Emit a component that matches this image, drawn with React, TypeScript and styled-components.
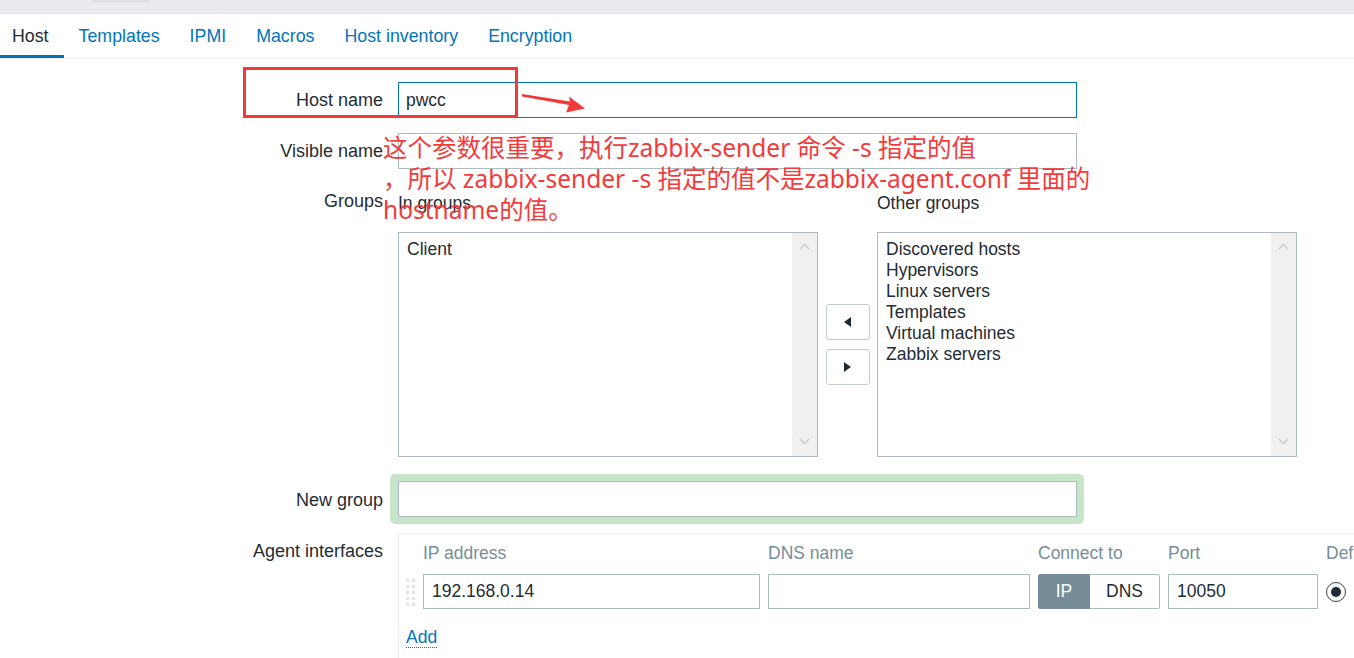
import React from 'react';
import styled, {createGlobalStyle} from "styled-components";

const GlobalStyle = createGlobalStyle`
    html, body {
        margin: 0;
        padding: 0;
        overflow: hidden;
        background: #ffffff;
    }
    body {
        font-family: "Liberation Sans", Arial, sans-serif;
        color: #1f2c33;
    }
    * {
        box-sizing: border-box;
    }
`

const tabs = ['Host', 'Templates', 'IPMI', 'Macros', 'Host inventory', 'Encryption'];
const inGroups = ['Client'];
const otherGroups = ['Discovered hosts', 'Hypervisors', 'Linux servers', 'Templates', 'Virtual machines', 'Zabbix servers'];

const Chevron = ({up}: { up?: boolean }) => (
    <svg width="11" height="7" viewBox="0 0 11 7">
        <path d={up ? "M1 6 L5.5 1.5 L10 6" : "M1 1 L5.5 5.5 L10 1"} stroke="#c6c6c6" strokeWidth="1.4" fill="none"/>
    </svg>
);

const Triangle = ({left}: { left?: boolean }) => (
    <svg width="7" height="10" viewBox="0 0 7 10">
        <path d={left ? "M7 0 L0 5 L7 10 Z" : "M0 0 L7 5 L0 10 Z"} fill="#1f2c33"/>
    </svg>
);

const DragHandle = () => (
    <svg width="9" height="27" viewBox="0 0 9 27">
        {[0, 6, 12, 18, 24].map(y => (
            <React.Fragment key={y}>
                <rect x="0" y={y} width="3" height="3" fill="#e1e4e7"/>
                <rect x="6" y={y} width="3" height="3" fill="#e1e4e7"/>
            </React.Fragment>
        ))}
    </svg>
);

const ListBox = ({items}: { items: string[] }) => (
    <List>
        <ListItems>
            {items.map(item => <div key={item}>{item}</div>)}
        </ListItems>
        <ScrollTrack>
            <Chevron up/>
            <Chevron/>
        </ScrollTrack>
    </List>
);

export default function App() {
    return (
        <Page>
            <GlobalStyle/>
            <TopStrip>
                <TopNub/>
            </TopStrip>
            <TabBar>
                {tabs.map((t, i) => <Tab key={t} $active={i === 0}>{t}</Tab>)}
            </TabBar>

            <Form>
                <FormRow $mt={0}>
                    <Label $lh={36}>Host name</Label>
                    <TextInput $focused defaultValue="pwcc"/>
                </FormRow>
                <FormRow $mt={15}>
                    <Label $lh={36}>Visible name</Label>
                    <TextInput defaultValue=""/>
                </FormRow>
                <FormRow $mt={22}>
                    <Label $lh={20}>Groups</Label>
                    <GroupsGrid>
                        <ColHeader>In groups</ColHeader>
                        <span/>
                        <ColHeader>Other groups</ColHeader>
                        <ListBox items={inGroups}/>
                        <ShiftButtons>
                            <ShiftButton><Triangle left/></ShiftButton>
                            <ShiftButton><Triangle/></ShiftButton>
                        </ShiftButtons>
                        <ListBox items={otherGroups}/>
                    </GroupsGrid>
                </FormRow>
                <FormRow $mt={25}>
                    <Label $lh={36}>New group</Label>
                    <div>
                        <Glow>
                            <TextInput defaultValue=""/>
                        </Glow>
                    </div>
                </FormRow>
                <FormRow $mt={15}>
                    <Label $lh={20} style={{paddingTop: 8}}>Agent interfaces</Label>
                    <InterfaceBox>
                        <InterfaceGrid>
                            <span/>
                            <HeadCell>IP address</HeadCell>
                            <HeadCell>DNS name</HeadCell>
                            <HeadCell>Connect to</HeadCell>
                            <HeadCell>Port</HeadCell>
                            <HeadCell>Default</HeadCell>

                            <HandleCell><DragHandle/></HandleCell>
                            <CellInput defaultValue="192.168.0.14"/>
                            <CellInput defaultValue=""/>
                            <Segmented>
                                <SegButton $active $w={52}>IP</SegButton>
                                <SegButton $w={70}>DNS</SegButton>
                            </Segmented>
                            <CellInput defaultValue="10050"/>
                            <RadioCell><Radio/></RadioCell>
                        </InterfaceGrid>
                        <AddLink>Add</AddLink>
                    </InterfaceBox>
                </FormRow>
            </Form>

            <RedFrame/>
            <Arrow width="70" height="24" viewBox="0 0 70 24">
                <polygon points="2,4 50,11.5 49,6.5 65,18.5 46,22.5 49,15 2,6.5" fill="#f03a3a"/>
            </Arrow>
            <Note>
                {'这个参数很重要，执行zabbix-sender 命令 -s 指定的值\n，所以 zabbix-sender -s 指定的值不是zabbix-agent.conf 里面的\nhostname的值。'}
            </Note>
        </Page>
    );
}

const Page = styled.div`
    position: relative;
    width: 1354px;
    height: 658px;
    overflow: hidden;
`

const TopStrip = styled.div`
    height: 14px;
    background: #e9ecee;
    border-bottom: 1px solid #dde2e5;
`

const TopNub = styled.div`
    margin-left: 92px;
    width: 58px;
    height: 2px;
    background: #dcdfe2;
    border-radius: 0 0 3px 3px;
`

const TabBar = styled.nav`
    display: flex;
    height: 45px;
    border-bottom: 1px solid #ebeef0;
`

const Tab = styled.a<{ $active?: boolean }>`
    padding: 0 15px;
    height: 44px;
    line-height: 44px;
    font-size: 17.8px;
    white-space: nowrap;
    color: ${p => p.$active ? '#1f2c33' : '#0275b8'};
    box-shadow: ${p => p.$active ? 'inset 0 -3px 0 #0275b8' : 'none'};

    &:first-child {
        padding-left: 12px;
    }
`

const Form = styled.div`
    padding-top: 23px;
`

const FormRow = styled.div<{ $mt: number }>`
    display: grid;
    grid-template-columns: 383px 1fr;
    column-gap: 15px;
    margin-top: ${p => p.$mt}px;
`

const Label = styled.div<{ $lh: number }>`
    text-align: right;
    font-size: 18px;
    line-height: ${p => p.$lh}px;
    white-space: nowrap;
    color: #1f2c33;
`

const TextInput = styled.input<{ $focused?: boolean }>`
    display: block;
    width: 679px;
    height: 36px;
    padding: 0 7px;
    border: 1px solid ${p => p.$focused ? '#0275b8' : '#acbbc2'};
    border-radius: 0;
    outline: none;
    font-family: "Liberation Sans", Arial, sans-serif;
    font-size: 17.5px;
    color: #1f2c33;
    background: #ffffff;
`

const GroupsGrid = styled.div`
    display: grid;
    grid-template-columns: 420px 44px 420px;
    grid-template-rows: 20px 225px;
    column-gap: 7.5px;
    row-gap: 19px;
    padding-top: 2px;
`

const ColHeader = styled.div`
    font-size: 17.5px;
    line-height: 20px;
    color: #1f2c33;
`

const List = styled.div`
    display: flex;
    height: 225px;
    border: 1px solid #acbbc2;
`

const ListItems = styled.div`
    flex: 1;
    padding: 6px 0 0 8px;
    font-size: 17.5px;
    line-height: 21px;
    color: #1f2c33;
`

const ScrollTrack = styled.div`
    width: 25px;
    background: #f0f0f0;
    display: flex;
    flex-direction: column;
    justify-content: space-between;
    align-items: center;
    padding: 10px 0 11px;
`

const ShiftButtons = styled.div`
    display: flex;
    flex-direction: column;
    gap: 9px;
    align-self: center;
`

const ShiftButton = styled.button`
    width: 44px;
    height: 36px;
    display: flex;
    align-items: center;
    justify-content: center;
    border: 1px solid #c3ccd2;
    border-radius: 3px;
    background: #ffffff;
    padding: 0;
`

const Glow = styled.div`
    display: inline-block;
    margin: -8px;
    padding: 7px 7px 7px 8px;
    border-radius: 5px;
    background: #c7e5c9;
`

const InterfaceBox = styled.div`
    border-top: 1px solid #ebeef0;
    border-left: 1px solid #ebeef0;
    padding: 9px 0 10px 7px;
    height: 130px;
`

const InterfaceGrid = styled.div`
    display: grid;
    grid-template-columns: 9px 337px 262px 122px 150px 120px;
    column-gap: 8px;
    row-gap: 11px;
`

const HeadCell = styled.div`
    font-size: 17.5px;
    line-height: 20px;
    color: #768d99;
    white-space: nowrap;
`

const HandleCell = styled.div`
    display: flex;
    align-items: center;
    padding-top: 2px;
`

const CellInput = styled.input`
    display: block;
    width: 100%;
    height: 35px;
    padding: 0 8px;
    border: 1px solid #acbbc2;
    border-radius: 0;
    outline: none;
    font-family: "Liberation Sans", Arial, sans-serif;
    font-size: 17.5px;
    color: #1f2c33;
`

const Segmented = styled.div`
    display: flex;
    height: 35px;
`

const SegButton = styled.div<{ $active?: boolean; $w: number }>`
    width: ${p => p.$w}px;
    display: flex;
    align-items: center;
    justify-content: center;
    font-size: 17.5px;
    border: 1px solid ${p => p.$active ? '#768d99' : '#acbbc2'};
    background: ${p => p.$active ? '#768d99' : '#ffffff'};
    color: ${p => p.$active ? '#ffffff' : '#1f2c33'};
    border-radius: ${p => p.$active ? '2px 0 0 2px' : '0 2px 2px 0'};
    ${p => p.$active ? '' : 'border-left: none;'}
`

const RadioCell = styled.div`
    display: flex;
    align-items: center;
`

const Radio = styled.span`
    width: 20px;
    height: 20px;
    border-radius: 50%;
    border: 1.5px solid #3b4348;
    display: flex;
    align-items: center;
    justify-content: center;

    &::after {
        content: "";
        width: 10px;
        height: 10px;
        border-radius: 50%;
        background: #1f2c33;
    }
`

const AddLink = styled.a`
    display: inline-block;
    margin-top: 19px;
    font-size: 17.5px;
    line-height: 19px;
    color: #0275b8;
    border-bottom: 1px dotted #0275b8;
`

const RedFrame = styled.div`
    position: absolute;
    left: 243px;
    top: 67px;
    width: 275px;
    height: 51px;
    border: 3px solid #f03a3a;
`

const Arrow = styled.svg`
    position: absolute;
    left: 520px;
    top: 90px;
`

const Note = styled.div`
    position: absolute;
    left: 383px;
    top: 132px;
    font-family: "Noto Sans", "Noto Sans CJK SC", sans-serif;
    font-size: 24.5px;
    line-height: 31px;
    color: #f33b3b;
    white-space: pre;
`
